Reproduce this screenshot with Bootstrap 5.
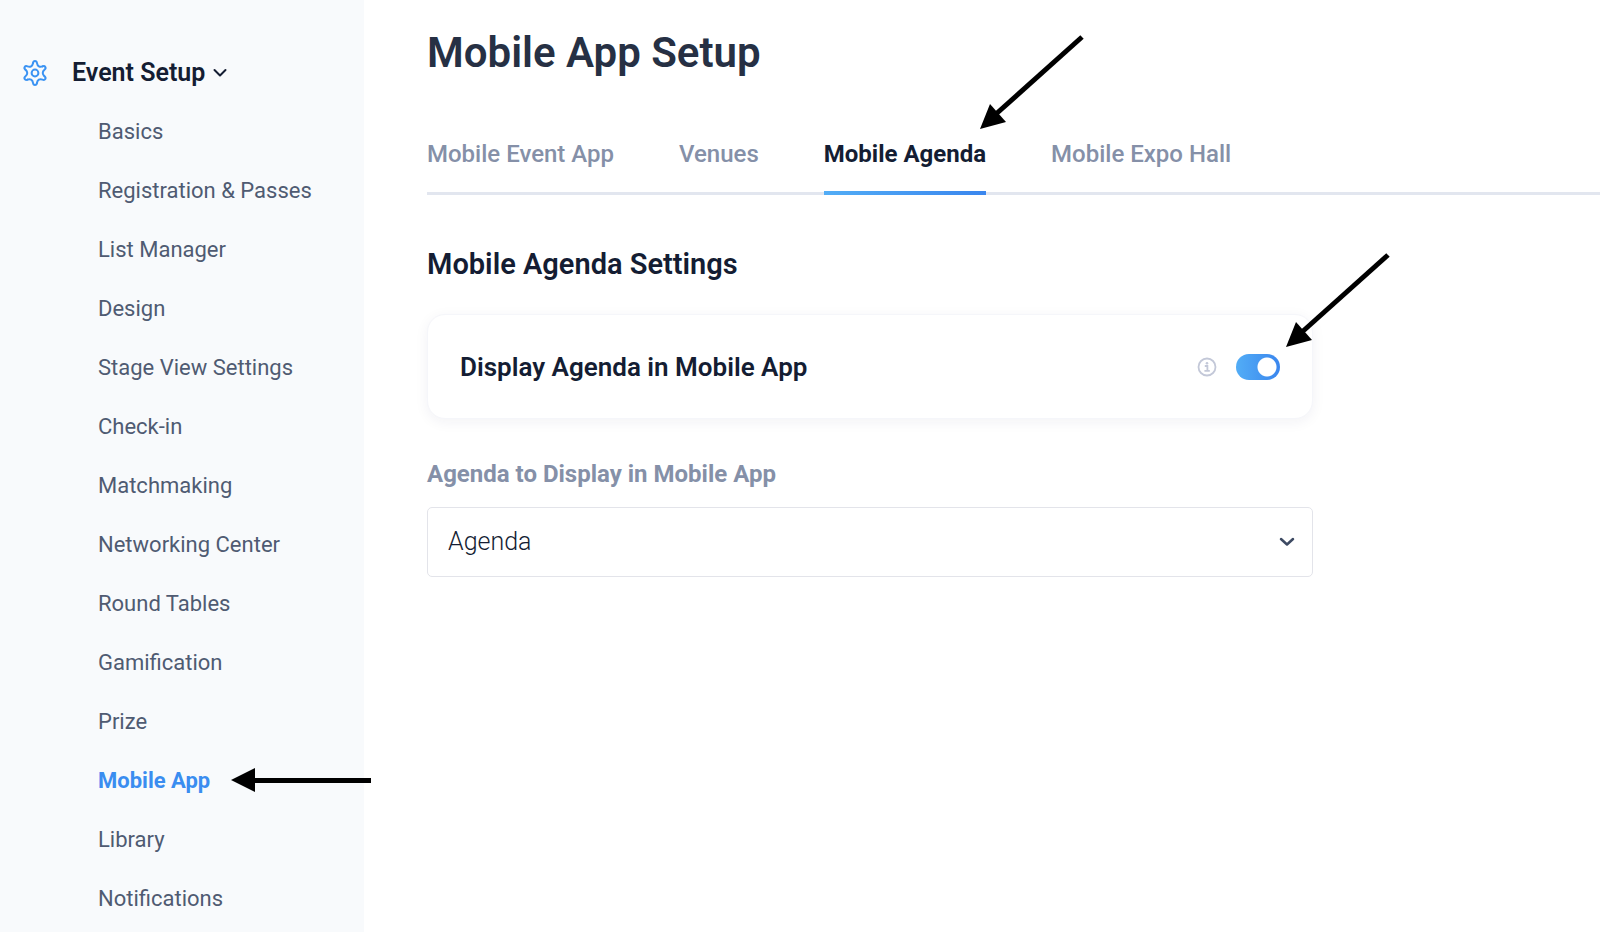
<!DOCTYPE html>
<html lang="en">
<head>
<meta charset="utf-8">
<meta name="viewport" content="width=device-width, initial-scale=1">
<title>Mobile App Setup</title>
<link href="https://cdn.jsdelivr.net/npm/bootstrap@5.3.0/dist/css/bootstrap.min.css" rel="stylesheet">
<style>
  :root {
    --ink: #141d33;
    --heading: #263044;
    --slate: #4f5b72;
    --muted: #8590a8;
    --line: #e2e6ef;
    --accent: #3a8df0;
  }
  body { font-family: Roboto, "Liberation Sans", sans-serif; color: var(--ink); background: #fff; }
  a { text-decoration: none; }

  .sidebar { width: 364px; background: #f8fafc; padding: 56px 0 0 22px; }
  .sidebar-head { height: 34px; }
  .sidebar-toggle { font-size: 25px; line-height: 34px; font-weight: 600; color: var(--ink); }
  .side-link { font-size: 22px; line-height: 28px; font-weight: 400; padding: 0; color: var(--slate); }
  .side-list { margin-left: 76px; padding-top: 28px; gap: 31px; }
  .side-link:hover, .side-link.active { color: var(--accent); }
  .side-link.active { font-weight: 700; }

  .content { padding: 28px 0 32px 63px; min-width: 0; }
  .page-title { font-size: 42px; line-height: 50px; font-weight: 600; color: var(--heading); }
  .tab-row { gap: 65px; margin-top: 60px; box-shadow: inset 0 -3px 0 var(--line); }
  .tab-link { font-size: 24px; line-height: 32px; font-weight: 500; color: var(--muted); padding: 0 0 25px; border-radius: 0; }
  .tab-link:hover { color: var(--ink); }
  .tab-link.active {
    font-weight: 700; color: var(--ink);
    background: linear-gradient(90deg, #52adf6, #3a86ee) bottom / 100% 4px no-repeat;
  }

  .settings { max-width: 886px; margin-top: 51px; }
  .section-title { font-size: 29px; line-height: 36px; font-weight: 600; }
  .setting-card { margin-top: 32px; padding: 0 32px; height: 105px; border: 1px solid #f5f6fa; border-radius: 18px; box-shadow: 0 3px 14px rgba(30, 40, 80, .06); }
  .setting-label { font-size: 26px; line-height: 32px; font-weight: 600; }
  .setting-switch.form-check-input {
    width: 44px; height: 26px; margin: 0; border: 0; border-radius: 13px; cursor: pointer; appearance: none;
    background: radial-gradient(circle at 13px 13px, #fff 9px, transparent 10px), #c5ccda;
  }
  .setting-switch.form-check-input:checked {
    background: radial-gradient(circle at 31px 13px, #fff 9px, transparent 10px), linear-gradient(90deg, #52adf6, #3a86ee);
  }
  .field-label { font-size: 24px; line-height: 32px; font-weight: 700; color: var(--muted); margin: 39px 0 17px; }
  .agenda-select {
    height: 70px; font-size: 25px; font-weight: 300; color: var(--ink); padding: 0 48px 0 20px; border: 1px solid #e3e4ea; border-radius: 5px;
    background: #fff url("data:image/svg+xml,%3Csvg xmlns='http://www.w3.org/2000/svg' viewBox='0 0 16 10'%3E%3Cpath d='M2 2l6 5.500 6-5.500' fill='none' stroke='%233d4a63' stroke-width='2.500' stroke-linecap='round' stroke-linejoin='round'/%3E%3C/svg%3E") right 17px center / 16px 10px no-repeat;
  }

  .pointer { position: absolute; z-index: 2; pointer-events: none; overflow: visible; }
  .pointer-tab { right: -98px; top: -104px; }
  .pointer-switch { left: 100%; bottom: 100%; margin: 0 0 6px 6px; }
  .pointer-side { left: 100%; top: 1px; margin-left: 21px; }
</style>
</head>
<body>
<svg width="0" height="0" class="position-absolute" aria-hidden="true">
  <symbol id="slanted" viewBox="0 0 104 96">
    <path d="M102 3 16 80" stroke="#000" stroke-width="5" fill="none"/>
    <path d="M0 95 10 70 26 88Z"/>
  </symbol>
</svg>
<div class="d-flex min-vh-100 overflow-hidden">
  <aside class="sidebar flex-shrink-0">
    <div class="sidebar-head d-flex align-items-center">
      <svg width="26" height="28" viewBox="-13 -14 26 28" fill="none" stroke="#3b93f3" stroke-width="2" stroke-linecap="round" aria-hidden="true">
        <defs><path id="cog" d="M-2 -9.800C-1.600 -12.600 1.600 -12.600 2 -9.800C2.400 -6.800 4.800 -5.600 7.490 -6.630"/></defs>
        <use href="#cog"/>
        <use href="#cog" transform="rotate(60)"/>
        <use href="#cog" transform="rotate(120)"/>
        <use href="#cog" transform="rotate(180)"/>
        <use href="#cog" transform="rotate(240)"/>
        <use href="#cog" transform="rotate(300)"/>
        <circle r="3.400"/>
      </svg>
      <button type="button" class="sidebar-toggle btn border-0 p-0 ms-4 d-flex align-items-center gap-2" aria-expanded="true">
        Event Setup
        <svg width="14" height="10" viewBox="0 0 14 10" fill="none" stroke="currentColor" stroke-width="2" stroke-linecap="round" stroke-linejoin="round" aria-hidden="true"><path d="M1.500 2 7 7.500 12.500 2"/></svg>
      </button>
    </div>
    <nav class="side-list nav flex-column align-items-start" aria-label="Event setup">
      <a class="side-link nav-link" href="#">Basics</a>
      <a class="side-link nav-link" href="#">Registration &amp; Passes</a>
      <a class="side-link nav-link" href="#">List Manager</a>
      <a class="side-link nav-link" href="#">Design</a>
      <a class="side-link nav-link" href="#">Stage View Settings</a>
      <a class="side-link nav-link" href="#">Check-in</a>
      <a class="side-link nav-link" href="#">Matchmaking</a>
      <a class="side-link nav-link" href="#">Networking Center</a>
      <a class="side-link nav-link" href="#">Round Tables</a>
      <a class="side-link nav-link" href="#">Gamification</a>
      <a class="side-link nav-link" href="#">Prize</a>
      <a class="side-link nav-link active position-relative" href="#" aria-current="page">Mobile App
        <svg class="pointer pointer-side" width="140" height="24" viewBox="0 0 140 24" aria-hidden="true"><path d="M0 12 24 0v24Z"/><path d="M22 12.500H140" stroke="#000" stroke-width="5"/></svg>
      </a>
      <a class="side-link nav-link" href="#">Library</a>
      <a class="side-link nav-link" href="#">Notifications</a>
    </nav>
  </aside>

  <main class="content flex-grow-1">
    <h1 class="page-title mb-0">Mobile App Setup</h1>
    <nav class="tab-row nav" aria-label="Mobile app sections">
      <a class="tab-link nav-link" href="#">Mobile Event App</a>
      <a class="tab-link nav-link" href="#">Venues</a>
      <a class="tab-link nav-link active position-relative" href="#" aria-current="page">Mobile Agenda
        <svg class="pointer pointer-tab" width="104" height="96" aria-hidden="true"><use href="#slanted"/></svg>
      </a>
      <a class="tab-link nav-link" href="#">Mobile Expo Hall</a>
    </nav>

    <section class="settings">
      <h2 class="section-title mb-0">Mobile Agenda Settings</h2>
      <div class="setting-card card flex-row align-items-center justify-content-between">
        <label class="setting-label" for="showAgenda">Display Agenda in Mobile App</label>
        <div class="d-flex align-items-center position-relative">
          <button type="button" class="btn border-0 p-0 me-3 d-flex" aria-label="More information">
            <svg width="24" height="20" viewBox="0 0 24 20" fill="none" stroke="#c3c8d8" aria-hidden="true">
              <circle cx="11" cy="10" r="8.500" stroke-width="1.800"/>
              <path d="M8.800 9h2.600v4.500M8.400 13.800h5.400" stroke-width="1.800"/>
              <circle cx="11" cy="6.200" r="1.300" fill="#c3c8d8" stroke="none"/>
            </svg>
          </button>
          <input class="setting-switch form-check-input" type="checkbox" role="switch" id="showAgenda" checked>
          <svg class="pointer pointer-switch" width="104" height="96" aria-hidden="true"><use href="#slanted"/></svg>
        </div>
      </div>
      <label class="field-label d-block" for="agendaPick">Agenda to Display in Mobile App</label>
      <select class="agenda-select form-select" id="agendaPick">
        <option selected>Agenda</option>
      </select>
    </section>
  </main>
</div>
<script src="https://cdn.jsdelivr.net/npm/bootstrap@5.3.0/dist/js/bootstrap.bundle.min.js"></script>
</body>
</html>
